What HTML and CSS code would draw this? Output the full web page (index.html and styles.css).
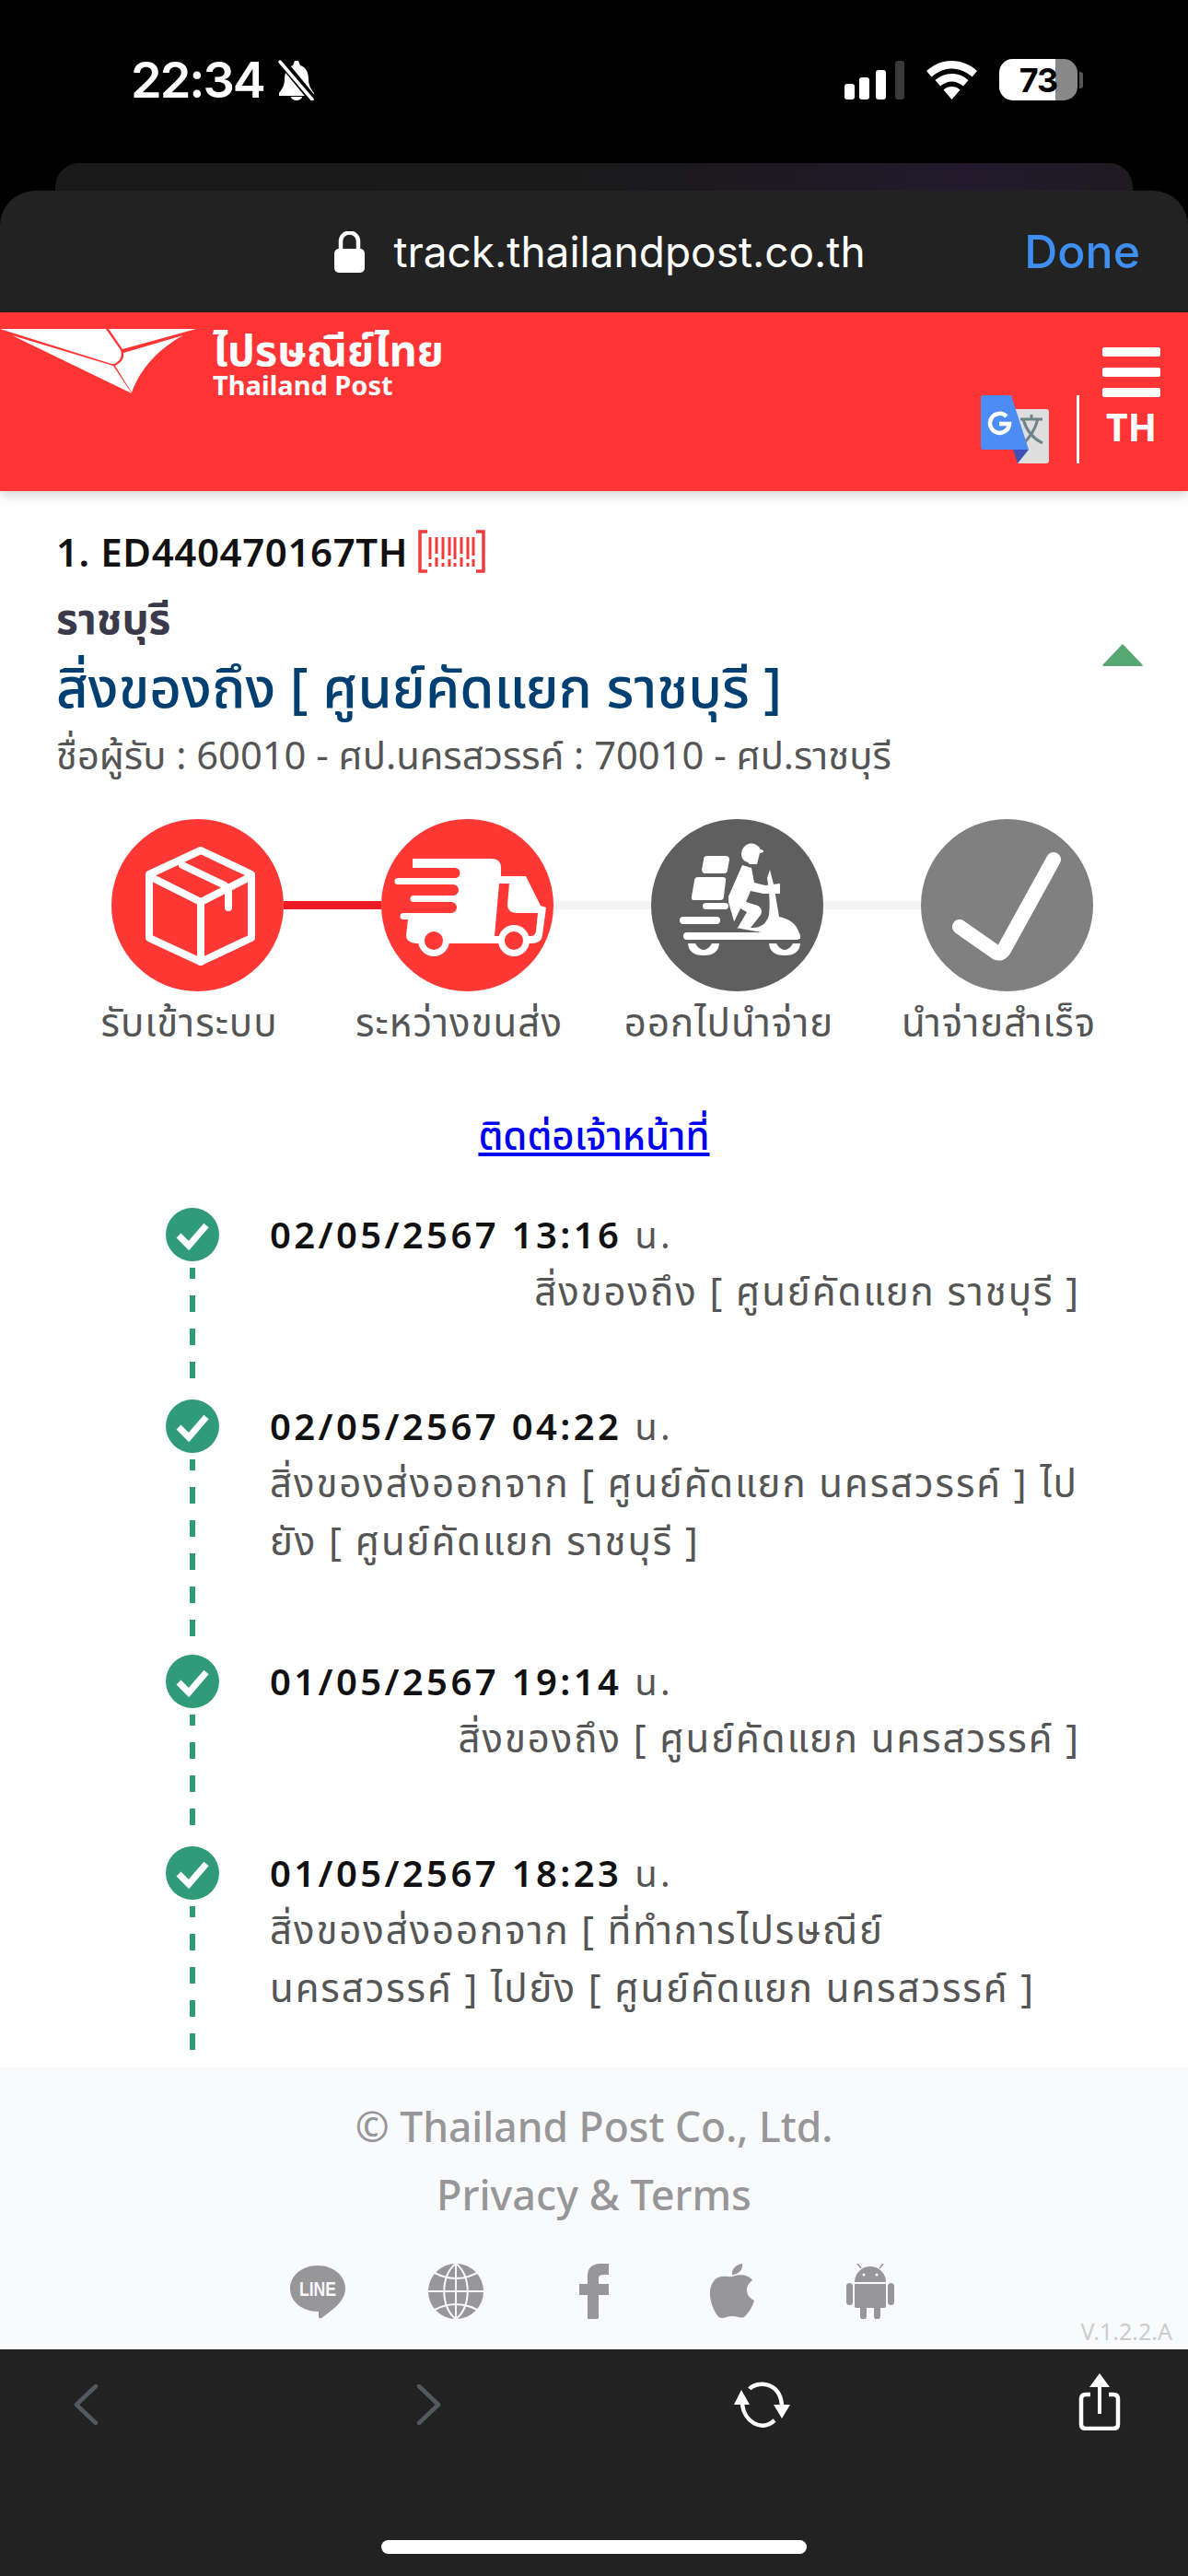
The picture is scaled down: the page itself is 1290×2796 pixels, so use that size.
FILE: index.html
```html
<!DOCTYPE html>
<html lang="th">

<head>
    <meta charset="utf-8">
    <meta name="viewport" content="width=device-width">
    <link rel="stylesheet" href="styles.css">
    <title>Thailand Post Track</title>
</head>

<body>
    <div class="statusbar">
        <div class="status-left">
            <span class="clock">22:34</span>
            <svg class="bell" width="44" height="44" viewBox="0 0 44 44">
                <path d="M20 1h4l2 5c7 2 9 9 9 15 0 7 3 11 6 15v3H3v-3c3-4 6-8 6-15 0-6 2-13 9-15z" fill="#fff"/>
                <path d="M16 40h12a6 4 0 0 1-12 0z" fill="#fff"/>
                <path d="M6 2l33 40" stroke="#000" stroke-width="9"/>
                <path d="M4 2l35 41" stroke="#fff" stroke-width="3.5" stroke-linecap="round"/>
            </svg>
        </div>
        <div class="status-right">
            <svg width="65" height="42" viewBox="0 0 65 42">
                <rect x="0" y="25" width="11" height="17" rx="3" fill="#fff"/>
                <rect x="16" y="18" width="11" height="24" rx="3" fill="#fff"/>
                <rect x="34" y="10" width="11" height="32" rx="3" fill="#fff"/>
                <rect x="55" y="0" width="10" height="42" rx="3" fill="#3a3a3c"/>
            </svg>
            <svg width="57" height="42" viewBox="0 0 57 42">
                <path d="M28.500 0C18 0 8.500 4 1 11l5.500 6.500C12.500 12 20 8.500 28.500 8.500S44.500 12 50.500 17.500L56 11C48.500 4 39 0 28.500 0z" fill="#fff"/>
                <path d="M28.500 14c-7 0-13 2.500-18 7l5.500 6.500c3.500-3 8-5 12.500-5s9 2 12.500 5l5.500-6.500c-5-4.500-11-7-18-7z" fill="#fff"/>
                <path d="M28.500 28c-3.500 0-6.500 1-9 3.500L28.500 42l9-10.500c-2.500-2.500-5.500-3.500-9-3.500z" fill="#fff"/>
            </svg>
            <div class="battery-wrap">
                <div class="battery">
                    <div class="battery-level"></div>
                    <span class="battery-text">73</span>
                </div>
                <div class="battery-nub"></div>
            </div>
        </div>
    </div>

    <div class="back-card"></div>

    <div class="sheet-bar">
        <div class="address">
            <svg width="35" height="45" viewBox="0 0 35 45">
                <path d="M8 20v-9a9.500 9.500 0 0 1 19 0v9" fill="none" stroke="#fff" stroke-width="4.500"/>
                <rect x="1" y="19" width="33" height="26" rx="5" fill="#fff"/>
            </svg>
            <span class="address-text">track.thailandpost.co.th</span>
        </div>
        <span class="done">Done</span>
    </div>

    <header class="site-header">
        <svg class="logo-mark" width="213" height="73" viewBox="0 0 213 73">
            <path d="M0 0H115L131 23Q134 32 126 37Q123 39 118 37Z" fill="#fff"/>
            <path d="M118 0H213L133 22Z" fill="#fff"/>
            <path d="M13 7L123 40L143 70Z" fill="#fff"/>
            <path d="M199 7L134 26Q135 34 128 38L125 40L143 69C153 42 172 22 199 7Z" fill="#fff"/>
        </svg>
        <div class="logo-text">
            <div class="logo-th">ไปรษณีย์ไทย</div>
            <div class="logo-en">Thailand Post</div>
        </div>
        <div class="header-tools">
            <svg class="translate-icon" width="76" height="75" viewBox="0 0 76 75">
                <path d="M36 15H72Q75 15 75 18V71Q75 74 72 74H41Z" fill="#dedede"/>
                <path d="M44 26H68M56 21V26M47 26Q52 44 68 52M63 26Q58 44 45 54" fill="none" stroke="#6f8489" stroke-width="3"/>
                <path d="M36 59H53L41 74Z" fill="#3f51b5"/>
                <path d="M4 0H34L53 59H4Q1 59 1 56V3Q1 0 4 0Z" fill="#4e8cf5"/>
                <path d="M29 23A10.500 10.500 0 1 0 32 31H21" fill="none" stroke="#fff" stroke-width="4.500"/>
            </svg>
            <div class="tools-divider"></div>
            <div class="menu-col">
                <div class="menu-bar"></div>
                <div class="menu-bar"></div>
                <div class="menu-bar"></div>
                <div class="lang">TH</div>
            </div>
        </div>
    </header>

    <main class="content">
        <div class="order-row">
            <span class="order-no">1. ED440470167TH</span>
            <svg class="barcode" width="73" height="47" viewBox="0 0 73 47">
                <path d="M10 2H2V45H10M63 2H71V45H63" fill="none" stroke="#f33b3b" stroke-width="3.500"/>
                <path d="M13 8V32M13 36V40M20 8V26M20 30V40M27 8V32M27 36V40M34 8V28M34 32V40M40 8V32M40 36V40M47 8V26M47 30V40M54 8V32M54 36V40M60 8V28M60 32V40" fill="none" stroke="#f33b3b" stroke-width="3"/>
            </svg>
        </div>
        <div class="city-row">
            <div class="city">ราชบุรี</div>
            <div class="status-row">
                <div class="status-title">สิ่งของถึง [ ศูนย์คัดแยก ราชบุรี ]</div>
                <svg class="caret" width="46" height="26" viewBox="0 0 46 26">
                    <path d="M23 1L45 24Q45 25 43 25H3Q1 25 1 24Z" fill="#57a773"/>
                </svg>
            </div>
            <div class="receiver">ชื่อผู้รับ : 60010 - ศป.นครสวรรค์ : 70010 - ศป.ราชบุรี</div>
        </div>

        <div class="steps">
            <div class="step-circle step-red">
                <svg width="187" height="187" viewBox="0 0 187 187">
                    <path d="M97 34L152 60V129L97 155L41 129V60Z" fill="none" stroke="#fff" stroke-width="8" stroke-linejoin="round"/>
                    <path d="M41 62L97 90L152 62M97 90V155M77 50L123 72M127 74V96" fill="none" stroke="#fff" stroke-width="8" stroke-linecap="round"/>
                </svg>
            </div>
            <div class="step-line step-line-on"></div>
            <div class="step-circle step-red">
                <svg width="187" height="187" viewBox="0 0 187 187">
                    <path d="M38 43H120Q130 43 130 53V62H157L173 94L179 96L175 126Q174 135 163 135H41Q27 135 27 126L29 109H34V43Z" fill="#fff"/>
                    <path d="M20 53H80a5.500 5.500 0 0 1 0 11H20ZM20 71H78a6 6 0 0 1 0 12H20ZM20 90H76a6 6 0 0 1 0 12H20Z" fill="#ff3835"/>
                    <path d="M18 64H40V71H18a3.500 3.500 0 0 1 0-7ZM35 83H50V90H35a3.500 3.500 0 0 1 0-7ZM24 102H40V109H24a3.500 3.500 0 0 1 0-7Z" fill="#fff"/>
                    <rect x="17" y="82" width="14" height="9" fill="#ff3835"/>
                    <path d="M128 70H139L137 93Q137 102 148 102H170L168 122Q167 127 162 127H123Z" fill="#ff3835"/>
                    <circle cx="57" cy="132" r="17" fill="#fff"/>
                    <circle cx="57" cy="132" r="10" fill="#ff3835"/>
                    <circle cx="144" cy="132" r="17" fill="#fff"/>
                    <circle cx="144" cy="132" r="10" fill="#ff3835"/>
                </svg>
            </div>
            <div class="step-line"></div>
            <div class="step-circle step-dark">
                <svg width="187" height="187" viewBox="0 0 187 187">
                    <path d="M61 40H81Q85 40 85 44L83 55Q83 59 79 59H59Q55 59 55 55L57 44Q57 40 61 40Z" fill="#fff"/>
                    <path d="M51 63H78Q82 63 81 67L79 84Q79 88 75 88H47Q43 88 44 84L47 67Q47 63 51 63Z" fill="#fff"/>
                    <path d="M98 38a11 11 0 0 1 21-5l3 1v2l-4 1-3 12h-8l-2-2q-7-2-7-9z" fill="#fff"/>
                    <path d="M99 50L109 53L112 69L124 72L140 70V81L122 81L108 78L103 90L116 94Q122 98 119 104L108 118Q124 119 128 104Q130 85 126 64L129 55L133 71L139 106Q160 110 162 130H40L38 123H120L92 118L84 90L84 84Z" fill="#fff"/>
                    <path d="M97 97L104 101L94 118H87Z" fill="#5f5f5f"/>
                    <rect x="56" y="91" width="28" height="7" rx="3.500" fill="#fff"/>
                    <rect x="31" y="106" width="44" height="8" rx="4" fill="#fff"/>
                    <rect x="35" y="123" width="127" height="8" rx="4" fill="#fff"/>
                    <path d="M40 135H74Q73 148 57 148Q41 148 40 135ZM48 135Q52 142 57 142Q62 142 66 135Z" fill="#fff" fill-rule="evenodd"/>
                    <path d="M128 135H162Q161 148 145 148Q129 148 128 135ZM136 135Q140 142 145 142Q150 142 154 135Z" fill="#fff" fill-rule="evenodd"/>
                </svg>
            </div>
            <div class="step-line"></div>
            <div class="step-circle step-grey">
                <svg width="187" height="187" viewBox="0 0 187 187">
                    <path d="M42 117L82 145Q87 147 90 142L144 44" fill="none" stroke="#fff" stroke-width="16" stroke-linecap="round" stroke-linejoin="round"/>
                </svg>
            </div>
        </div>
        <div class="step-labels">
            <div class="step-label">รับเข้าระบบ</div>
            <div class="step-label">ระหว่างขนส่ง</div>
            <div class="step-label">ออกไปนำจ่าย</div>
            <div class="step-label">นำจ่ายสำเร็จ</div>
        </div>

        <a class="contact-link" href="#">ติดต่อเจ้าหน้าที่</a>

        <div class="timeline">
            <div class="tl-item">
                <div class="tl-marker">
                    <svg class="tl-dot" width="58" height="58" viewBox="0 0 58 58"><circle cx="29" cy="29" r="29" fill="#2f9b79"/><path d="M14 30L25 41L44 19" fill="none" stroke="#fff" stroke-width="7"/></svg>
                    <div class="tl-dash"></div>
                </div>
                <div class="tl-body">
                    <div class="tl-date"><b>02/05/2567 13:16</b> น.</div>
                    <div class="tl-desc tl-desc-right">สิ่งของถึง [ ศูนย์คัดแยก ราชบุรี ]</div>
                </div>
            </div>
            <div class="tl-item tl-item-wrap">
                <div class="tl-marker">
                    <svg class="tl-dot" width="58" height="58" viewBox="0 0 58 58"><circle cx="29" cy="29" r="29" fill="#2f9b79"/><path d="M14 30L25 41L44 19" fill="none" stroke="#fff" stroke-width="7"/></svg>
                    <div class="tl-dash"></div>
                </div>
                <div class="tl-body">
                    <div class="tl-date"><b>02/05/2567 04:22</b> น.</div>
                    <div class="tl-desc">สิ่งของส่งออกจาก [ ศูนย์คัดแยก นครสวรรค์ ] ไป<br>ยัง [ ศูนย์คัดแยก ราชบุรี ]</div>
                </div>
            </div>
            <div class="tl-item">
                <div class="tl-marker">
                    <svg class="tl-dot" width="58" height="58" viewBox="0 0 58 58"><circle cx="29" cy="29" r="29" fill="#2f9b79"/><path d="M14 30L25 41L44 19" fill="none" stroke="#fff" stroke-width="7"/></svg>
                    <div class="tl-dash"></div>
                </div>
                <div class="tl-body">
                    <div class="tl-date"><b>01/05/2567 19:14</b> น.</div>
                    <div class="tl-desc tl-desc-right">สิ่งของถึง [ ศูนย์คัดแยก นครสวรรค์ ]</div>
                </div>
            </div>
            <div class="tl-item tl-item-last">
                <div class="tl-marker">
                    <svg class="tl-dot" width="58" height="58" viewBox="0 0 58 58"><circle cx="29" cy="29" r="29" fill="#2f9b79"/><path d="M14 30L25 41L44 19" fill="none" stroke="#fff" stroke-width="7"/></svg>
                    <div class="tl-dash"></div>
                </div>
                <div class="tl-body">
                    <div class="tl-date"><b>01/05/2567 18:23</b> น.</div>
                    <div class="tl-desc">สิ่งของส่งออกจาก [ ที่ทำการไปรษณีย์<br>นครสวรรค์ ] ไปยัง [ ศูนย์คัดแยก นครสวรรค์ ]</div>
                </div>
            </div>
        </div>
    </main>

    <footer class="site-footer">
        <div class="copyright">© Thailand Post Co., Ltd.</div>
        <div class="privacy">Privacy &amp; Terms</div>
        <div class="social">
            <div class="social-item">
                <svg width="62" height="60" viewBox="0 0 62 60">
                    <path d="M31 2C48 2 61 13 61 27C61 41 46 51 35 59C33 60 32 59 32 57V52C14 52 1 41 1 27C1 13 14 2 31 2Z" fill="#979698"/>
                    <text class="line-word" text-anchor="middle" transform="translate(31 35) scale(0.8 1)">LINE</text>
                </svg>
            </div>
            <div class="social-item">
                <svg width="62" height="60" viewBox="0 0 62 60">
                    <ellipse cx="31" cy="30" rx="30" ry="30" fill="#979698"/>
                    <path d="M31 0V60M1 30H61M31 0C14 12 14 48 31 60M31 0C48 12 48 48 31 60M8 10Q31 22 54 10M8 50Q31 38 54 50" fill="none" stroke="#f9fafc" stroke-width="2"/>
                </svg>
            </div>
            <div class="social-item">
                <svg width="32" height="60" viewBox="0 0 32 60">
                    <path d="M9 60V34H0V22H9V13C9 5 14 0 23 0H32V12H26C23 12 21 13 21 16V22H32V34H21V59Q21 60 19 60Z" fill="#979698"/>
                </svg>
            </div>
            <div class="social-item">
                <svg width="50" height="60" viewBox="0 0 50 60">
                    <path d="M25 14C21 15 11 11 5 19C-3 29 2 47 9 56C13 62 18 57 25 57C32 57 36 61 40 56C44 51 47 47 49 40C43 37 41 33 41 28C41 24 43 21 47 18C43 12 33 11 25 14Z" fill="#979698"/>
                    <path d="M25 12C24 6 29 1 36 0C37 6 32 12 25 12Z" fill="#979698"/>
                </svg>
            </div>
            <div class="social-item">
                <svg width="52" height="60" viewBox="0 0 52 60">
                    <path d="M9 20A17 17 0 0 1 43 20H9Z" fill="#979698"/>
                    <path d="M16 5L12 0M36 5L40 0" stroke="#979698" stroke-width="1.500"/>
                    <circle cx="19" cy="12" r="1.500" fill="#f9fafc"/>
                    <circle cx="33" cy="12" r="1.500" fill="#f9fafc"/>
                    <path d="M9 22H43V46Q43 48 41 48H37V57a3.500 3.500 0 0 1-7 0V48H22V57a3.500 3.500 0 0 1-7 0V48H11Q9 48 9 46Z" fill="#979698"/>
                    <rect x="0" y="21" width="7" height="24" rx="3.500" fill="#979698"/>
                    <rect x="45" y="21" width="7" height="24" rx="3.500" fill="#979698"/>
                </svg>
            </div>
        </div>
        <div class="version">V.1.2.2.A</div>
    </footer>

    <div class="toolbar">
        <div class="toolbar-icons">
            <svg class="tb-back" width="27" height="44" viewBox="0 0 27 44"><path d="M24 2L3 22L24 42" fill="none" stroke="#55585e" stroke-width="4.500" stroke-linecap="round" stroke-linejoin="round"/></svg>
            <svg class="tb-forward" width="27" height="44" viewBox="0 0 27 44"><path d="M3 2L24 22L3 42" fill="none" stroke="#55585e" stroke-width="4.500" stroke-linecap="round" stroke-linejoin="round"/></svg>
            <svg class="tb-reload" width="63" height="50" viewBox="0 0 63 50">
                <path d="M18 8C24 0 50 -2 53 25M10 25C12 42 30 56 45 42" fill="none" stroke="#fff" stroke-width="4.500"/>
                <path d="M44 25H62L53 40ZM1 25H18L9 9Z" fill="#fff"/>
            </svg>
            <svg class="tb-share" width="47" height="62" viewBox="0 0 47 62">
                <path d="M23 0L34 15H25V44H21V15H12Z" fill="#fff"/>
                <path d="M13 23H8Q3 23 3 28V55Q3 60 8 60H38Q43 60 43 55V28Q43 23 38 23H33" fill="none" stroke="#fff" stroke-width="4.500"/>
            </svg>
        </div>
        <div class="home-indicator"></div>
    </div>
</body>

</html>
```

FILE: styles.css
```css
html,
body {
    width: 1290px;
    height: 2796px;
}

body {
    margin: 0;
    background: #000;
    display: flex;
    flex-direction: column;
    overflow: hidden;
    font-family: "Noto Sans", "Noto Sans Thai", "Open Sans", sans-serif;
    color: #555;
}

/* status bar */
.statusbar {
    height: 177px;
    flex: none;
    display: flex;
    justify-content: space-between;
    align-items: flex-start;
    padding: 64px 114px 0 142px;
    box-sizing: border-box;
    color: #fff;
    font-family: Inter, "Liberation Sans", sans-serif;
}

.status-left {
    display: flex;
    align-items: center;
    gap: 13px;
}

.clock {
    font-size: 54px;
    font-weight: 600;
    line-height: 46px;
    letter-spacing: -2px;
}

.status-right {
    display: flex;
    align-items: center;
    gap: 23px;
}

.battery-wrap {
    display: flex;
    align-items: center;
    gap: 2px;
}

.battery {
    width: 85px;
    height: 45px;
    border-radius: 15px;
    background: #888;
    overflow: hidden;
    display: flex;
    align-items: center;
    justify-content: center;
    position: relative;
}

.battery-nub {
    width: 4px;
    height: 18px;
    border-radius: 0 3px 3px 0;
    background: #555;
}

.battery-level {
    width: 72%;
    height: 100%;
    background: #fff;
    position: absolute;
    left: 0;
    top: 0;
}

.battery-text {
    position: relative;
    color: #000;
    font-size: 36px;
    font-weight: 700;
    letter-spacing: -1px;
}

.back-card {
    flex: none;
    height: 30px;
    margin: 0 60px;
    border-radius: 26px 26px 0 0;
    background: linear-gradient(to right, #191919 0%, #1b1a1c 55%, #221a2c 85%, #1e1b22 100%);
}

/* safari sheet top */
.sheet-bar {
    flex: none;
    height: 132px;
    background: #222;
    border-radius: 38px 38px 0 0;
    position: relative;
    display: flex;
    align-items: center;
    justify-content: center;
    font-family: Inter, "Liberation Sans", sans-serif;
}

.address {
    display: flex;
    align-items: center;
    gap: 30px;
    margin-left: 12px;
    color: #fff;
}

.address-text {
    font-size: 46px;
    line-height: 60px;
}

.done {
    position: absolute;
    right: 52px;
    top: 36px;
    font-size: 50px;
    line-height: 60px;
    color: #3f8ff0;
    font-weight: 500;
}

/* red header */
.site-header {
    flex: none;
    height: 194px;
    box-sizing: border-box;
    background: #ff3535;
    display: flex;
    align-items: flex-start;
    padding-top: 18px;
    position: relative;
    box-shadow: 0 4px 12px rgba(0, 0, 0, 0.18);
    z-index: 2;
}

.logo-text {
    margin-left: 18px;
    color: #fff;
}

.logo-th {
    font-size: 47px;
    font-weight: 700;
    line-height: 44px;
}

.logo-en {
    font-size: 29px;
    font-weight: 700;
    line-height: 32px;
    margin-top: 1px;
}

.header-tools {
    margin-left: auto;
    padding-right: 30px;
    display: flex;
    align-items: flex-start;
    padding-top: 20px;
}

.translate-icon {
    margin-top: 52px;
    margin-right: 29px;
}

.tools-divider {
    width: 3px;
    height: 74px;
    margin-top: 52px;
    background: #fff;
    margin-right: 25px;
}

.menu-col {
    width: 63px;
    display: flex;
    flex-direction: column;
    gap: 12px;
}

.menu-bar {
    height: 10px;
    border-radius: 2px;
    background: #fff;
}

.lang {
    color: #fff;
    font-size: 41px;
    font-weight: 700;
    line-height: 38px;
    text-align: center;
    margin-top: 1px;
}

/* main content */
.content {
    flex: 1;
    min-height: 0;
    background: #fff;
    overflow: hidden;
    display: flex;
    flex-direction: column;
    padding-top: 40px;
}

.order-row {
    display: flex;
    align-items: center;
    gap: 11px;
    height: 50px;
    padding-left: 61px;
}

.order-no {
    font-size: 42px;
    font-weight: 600;
    letter-spacing: 0.6px;
    color: #111;
}

.city-row {
    padding: 22px 48px 0 61px;
}

.city {
    font-size: 46px;
    font-weight: 700;
    line-height: 50px;
    color: #3a3a4a;
}

.status-row {
    display: flex;
    justify-content: space-between;
    margin-top: 25px;
    height: 50px;
}

.status-title {
    font-size: 60px;
    font-weight: 500;
    line-height: 50px;
    color: #003f72;
}

.caret {
    margin-top: -22px;
}

.receiver {
    margin-top: 24px;
    font-size: 41.7px;
    line-height: 50px;
}

.steps {
    margin: 45px 0 0 121px;
    width: 1066px;
    display: flex;
    align-items: center;
}

.step-circle {
    width: 187px;
    height: 187px;
    flex: none;
    border-radius: 50%;
}

.step-red {
    background: #ff3835;
}

.step-dark {
    background: #5f5f5f;
}

.step-grey {
    background: #808080;
}

.step-line {
    flex: 1;
    height: 9px;
    background: #f3f3f3;
}

.step-line-on {
    background: #ed1c24;
}

.step-labels {
    display: grid;
    grid-template-columns: repeat(4, 293px);
    margin: 8px 0 0 59px;
}

.step-label {
    text-align: center;
    font-size: 42px;
    letter-spacing: 1px;
    line-height: 50px;
    white-space: nowrap;
}

.contact-link {
    align-self: center;
    margin-top: 73px;
    font-size: 42px;
    font-weight: 500;
    line-height: 50px;
    color: #0000ee;
}

.timeline {
    flex: 1;
    min-height: 0;
    display: flex;
    flex-direction: column;
    margin: 54px 117px 0 180px;
}

.tl-item {
    display: flex;
    gap: 55px;
    height: 208px;
}

.tl-item-wrap {
    height: 277px;
}

.tl-item-last {
    height: 240px;
}

.tl-marker {
    width: 58px;
    flex: none;
    display: flex;
    flex-direction: column;
    align-items: center;
}

.tl-dot {
    flex: none;
}

.tl-dash {
    flex: 1;
    width: 6px;
    margin: 7px 0;
    background: linear-gradient(#2f9b79 50%, transparent 50%) 0 -6px / 6px 36px repeat-y;
}

.tl-body {
    flex: 1;
}

.tl-date {
    font-size: 40px;
    line-height: 58px;
    letter-spacing: 3.4px;
}

.tl-date b {
    color: #111;
    font-weight: 600;
}

.tl-desc {
    font-size: 42px;
    letter-spacing: 1.9px;
    line-height: 63px;
}

.tl-desc-right {
    text-align: right;
}

/* footer */
.site-footer {
    flex: none;
    height: 306px;
    box-sizing: border-box;
    background: #f9fafc;
    text-align: center;
    color: #979698;
    position: relative;
    padding-top: 28px;
}

.copyright,
.privacy {
    font-size: 45px;
    font-weight: 500;
    line-height: 73px;
}

.copyright {
    font-size: 44.4px;
}

.social {
    display: flex;
    justify-content: center;
    margin-top: 39px;
}

.social-item {
    width: 150px;
    height: 60px;
    display: flex;
    justify-content: center;
}

.line-word {
    font-family: "Liberation Sans", sans-serif;
    font-size: 22px;
    font-weight: 700;
    fill: #f9fafc;
}

.version {
    position: absolute;
    right: 17px;
    bottom: 4px;
    font-size: 25px;
    line-height: 32px;
    color: #ccc;
}

/* safari bottom toolbar */
.toolbar {
    flex: none;
    height: 246px;
    background: #222;
    display: flex;
    flex-direction: column;
    align-items: center;
}

.toolbar-icons {
    width: 100%;
    height: 207px;
    display: flex;
    align-items: flex-start;
    box-sizing: border-box;
    padding: 26px 0 0 80px;
}

.tb-back {
    margin-top: 12px;
}

.tb-forward {
    margin: 12px 0 0 345px;
}

.tb-reload {
    margin: 9px 0 0 317px;
}

.tb-share {
    margin-left: 312px;
}

.home-indicator {
    width: 462px;
    height: 15px;
    border-radius: 8px;
    background: #fff;
}
```
